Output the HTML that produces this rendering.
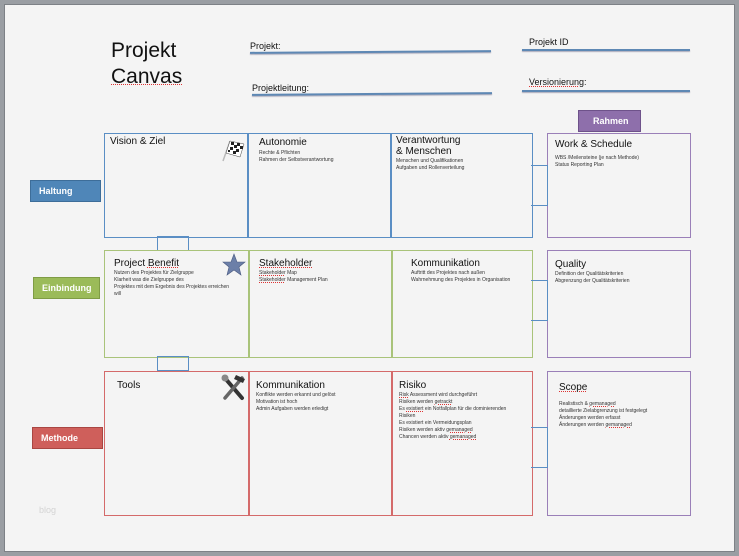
<!DOCTYPE html>
<html><head><meta charset="utf-8"><style>
*{margin:0;padding:0;box-sizing:border-box}
body{width:739px;height:556px;background:#9a9ea3;position:relative;overflow:hidden;font-family:"Liberation Sans",sans-serif;color:#111}
#pg{position:absolute;left:4px;top:4px;width:731px;height:548px;background:#f4f4f4;border:1px solid #7d8186}
.a{position:absolute}
.bx{position:absolute;border:1.5px solid}
.bl{border-color:#5a8ec4}.gr{border-color:#a9c37a}.rd{border-color:#d46a6a}.pu{border-color:#9a7fb8}
.t{position:absolute;font-size:10px;white-space:nowrap}
.s{position:absolute;font-size:5px;line-height:7px;white-space:nowrap;color:#333}
.ln{position:absolute;height:2px;background:#5e88b4;box-shadow:0 1px 1px #aab}
.lab{position:absolute;color:#fff;font-size:9px;font-weight:bold;display:flex;align-items:center;padding-left:8px}
u{text-decoration:underline dotted #d33;text-decoration-thickness:1px;text-underline-offset:1px}
</style></head><body><div id="pg"></div>
<div class="t" style="left:111px;top:38px;font-size:21px;line-height:26px">Projekt<br><u>Canvas</u></div>
<div class="t" style="left:250px;top:41px;font-size:9px">Projekt:</div>
<div class="ln" style="left:250px;top:51px;width:241px;transform:rotate(-0.4deg)"></div>
<div class="t" style="left:252px;top:83px;font-size:9px">Projektleitung:</div>
<div class="ln" style="left:252px;top:93px;width:240px;transform:rotate(-0.4deg)"></div>
<div class="t" style="left:529px;top:37px;font-size:9px">Projekt ID</div>
<div class="ln" style="left:522px;top:49px;width:168px"></div>
<div class="t" style="left:529px;top:77px;font-size:9px"><u>Versionierung</u>:</div>
<div class="ln" style="left:522px;top:90px;width:168px"></div>

<div class="lab" style="left:578px;top:110px;width:63px;height:22px;background:#8e6fab;border:1px solid #6e528a;padding-left:14px">Rahmen</div>
<div class="lab" style="left:30px;top:180px;width:71px;height:22px;background:#4f86b8;border:1px solid #3d6d99">Haltung</div>
<div class="lab" style="left:33px;top:277px;width:67px;height:22px;background:#9bbb59;border:1px solid #7f9c45">Einbindung</div>
<div class="lab" style="left:32px;top:427px;width:71px;height:22px;background:#cf5f5b;border:1px solid #a94642">Methode</div>
<div class="t" style="left:39px;top:505px;font-size:9px;color:#d4d4d4">blog</div>

<!-- row1 -->
<div class="bx bl" style="left:104px;top:133px;width:429px;height:105px"></div>
<div class="a" style="left:247px;top:133px;width:1.5px;height:105px;background:#5a8ec4"></div>
<div class="a" style="left:390px;top:133px;width:1.5px;height:105px;background:#5a8ec4"></div>
<div class="bx bl" style="left:157px;top:236px;width:32px;height:15px"></div>
<div class="t" style="left:110px;top:136px">Vision &amp; Ziel</div>
<div class="t" style="left:259px;top:137px">Autonomie</div>
<div class="s" style="left:259px;top:150px">Rechte &amp; Pflichten<br>Rahmen der Selbstverantwortung</div>
<div class="t" style="left:396px;top:135px;line-height:11px">Verantwortung<br>&amp; Menschen</div>
<div class="s" style="left:396px;top:158px">Menschen und Qualifikationen<br>Aufgaben und Rollenverteilung</div>
<svg class="a" style="left:221px;top:138px" width="25" height="25" viewBox="0 0 25 25"><line x1="2" y1="23" x2="9" y2="3" stroke="#bbb" stroke-width="1.5"/><path d="M9 3 L23 6 L19 19 L5 15 Z" fill="#fff" stroke="#444" stroke-width=".5"/><g fill="#222"><rect x="10" y="4" width="3" height="3"/><rect x="16" y="5" width="3" height="3"/><rect x="13" y="7" width="3" height="3"/><rect x="19" y="8" width="3" height="3"/><rect x="9" y="9" width="3" height="3"/><rect x="15" y="11" width="3" height="3"/><rect x="12" y="13" width="3" height="3"/><rect x="7" y="12" width="2" height="2"/></g></svg>

<!-- row2 -->
<div class="bx gr" style="left:104px;top:250px;width:429px;height:108px"></div>
<div class="a" style="left:248px;top:250px;width:1.5px;height:108px;background:#a9c37a"></div>
<div class="a" style="left:391px;top:250px;width:1.5px;height:108px;background:#a9c37a"></div>
<div class="bx bl" style="left:157px;top:356px;width:32px;height:15px"></div>
<div class="t" style="left:114px;top:258px">Project <u>Benefit</u></div>
<div class="s" style="left:114px;top:270px">Nutzen des Projektes für Zielgruppe<br>Klarheit was die Zielgruppe des<br>Projektes mit dem Ergebnis des Projektes erreichen<br>will</div>
<svg class="a" style="left:222px;top:253px" width="24" height="24" viewBox="0 0 24 24"><path d="M12 1 L15 9 L23 9 L17 14 L19 22 L12 17 L5 22 L7 14 L1 9 L9 9 Z" fill="#6c7fa8" stroke="#4a5a80" stroke-width=".6"/></svg>
<div class="t" style="left:259px;top:258px"><u>Stakeholder</u></div>
<div class="s" style="left:259px;top:270px"><u>Stakeholder</u> Map<br><u>Stakeholder</u> Management Plan</div>
<div class="t" style="left:411px;top:258px">Kommunikation</div>
<div class="s" style="left:411px;top:270px">Auftritt des Projektes nach außen<br>Wahrnehmung des Projektes in Organisation</div>

<!-- row3 -->
<div class="bx rd" style="left:104px;top:371px;width:429px;height:145px"></div>
<div class="a" style="left:248px;top:371px;width:1.5px;height:145px;background:#d46a6a"></div>
<div class="a" style="left:391px;top:371px;width:1.5px;height:145px;background:#d46a6a"></div>
<div class="t" style="left:117px;top:380px">Tools</div>
<svg class="a" style="left:220px;top:374px" width="26" height="28" viewBox="0 0 26 28"><path d="M4 3 L22 24" stroke="#333" stroke-width="4" stroke-linecap="round"/><path d="M22 4 L5 24" stroke="#666" stroke-width="3.5" stroke-linecap="round"/><path d="M16 1 L25 5 L23 9 L14 5Z" fill="#333"/><circle cx="5" cy="4" r="3.5" fill="#888"/></svg>
<div class="t" style="left:256px;top:380px">Kommunikation</div>
<div class="s" style="left:256px;top:392px">Konflikte werden erkannt und gelöst<br>Motivation ist hoch<br>Admin Aufgaben werden erledigt</div>
<div class="t" style="left:399px;top:380px">Risiko</div>
<div class="s" style="left:399px;top:392px"><u>Risk</u> Assessment wird durchgeführt<br>Risiken werden <u>getrackt</u><br>Es <u>existiert</u> ein Notfallplan für die dominierenden<br>Risiken<br>Es existiert ein Vermeidungsplan<br>Risiken werden aktiv <u>gemanaged</u><br>Chancen werden aktiv <u>gemanaged</u></div>

<!-- right -->
<div class="bx pu" style="left:547px;top:133px;width:144px;height:105px"></div>
<div class="bx pu" style="left:547px;top:250px;width:144px;height:108px"></div>
<div class="bx pu" style="left:547px;top:371px;width:144px;height:145px"></div>
<div class="bx bl" style="left:531px;top:165px;width:17px;height:41px;border-left:none"></div>
<div class="bx bl" style="left:531px;top:280px;width:17px;height:41px;border-left:none"></div>
<div class="bx bl" style="left:531px;top:427px;width:17px;height:41px;border-left:none"></div>
<div class="t" style="left:555px;top:139px">Work &amp; Schedule</div>
<div class="s" style="left:555px;top:155px">WBS /Meilensteine (je nach Methode)<br>Status Reporting Plan</div>
<div class="t" style="left:555px;top:259px">Quality</div>
<div class="s" style="left:555px;top:271px">Definition der Qualitätskriterien<br>Abgrenzung der Qualitätskriterien</div>
<div class="t" style="left:559px;top:382px"><u>Scope</u></div>
<div class="s" style="left:559px;top:401px">Realistisch &amp; <u>gemanaged</u><br>detaillierte Zielabgrenzung ist festgelegt<br>Änderungen werden erfasst<br>Änderungen werden <u>gemanaged</u></div>
</body></html>
